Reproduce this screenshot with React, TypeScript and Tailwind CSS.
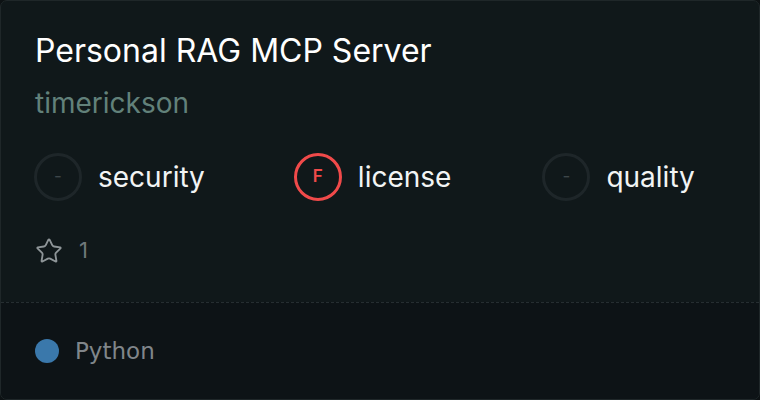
import { Star } from "lucide-react";

function Score({ grade, label, fail }: { grade: string; label: string; fail?: boolean }) {
  return (
    <div className="flex items-center gap-4">
      <div
        className={
          fail
            ? "w-12 h-12 rounded-full border-[3px] border-[#f04a4a] flex items-center justify-center text-[#f04a4a] text-[17px] font-semibold"
            : "w-12 h-12 rounded-full border-[3px] border-[#1e2629] flex items-center justify-center text-[#3d4649] text-[17px]"
        }
      >
        {grade}
      </div>
      <span className="text-[28px] leading-[36px] text-[#f2f4f4]">{label}</span>
    </div>
  );
}

export default function App() {
  return (
    <div className="w-[760px] h-[400px] bg-[#0d1214] font-['Inter',sans-serif]">
      <div className="w-full h-full rounded-[7px] border border-[#1f2729] bg-[#10181a] flex flex-col overflow-hidden">
        {/* main */}
        <div className="flex-1 px-[34px] pt-[30px]">
          <div className="text-[32px] leading-[40px] text-white">Personal RAG MCP Server</div>
          <div className="text-[28px] leading-[36px] mt-[14px] text-[#62817a]">timerickson</div>
          <div className="flex mt-[32px] -ml-px">
            <Score grade="-" label="security" />
            <div className="ml-[89px]">
              <Score grade="F" label="license" fail />
            </div>
            <div className="ml-[91px]">
              <Score grade="-" label="quality" />
            </div>
          </div>
          <div className="flex items-center gap-[16px] mt-[33px] text-[#8e9598]">
            <Star className="w-[28px] h-[28px]" strokeWidth={1.6} />
            <span className="text-[22px] text-[#6f777a]">1</span>
          </div>
        </div>
        {/* footer */}
        <div className="h-[97px] border-t border-dashed border-[#262e31] bg-[#0d1316] flex items-center gap-4 px-[34px]">
          <div className="w-6 h-6 rounded-full bg-[#3a78ab]" />
          <span className="text-[23px] text-[#80868a] font-['DejaVu_Sans',sans-serif]">Python</span>
        </div>
      </div>
    </div>
  );
}
